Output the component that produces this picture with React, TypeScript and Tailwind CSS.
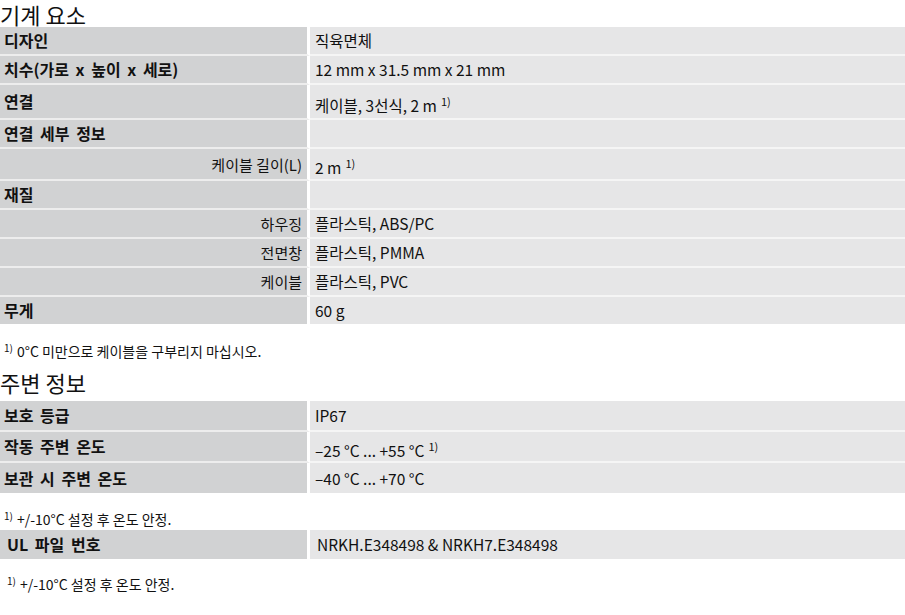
import React from 'react';

type Row = {
  label: string;
  value?: React.ReactNode;
  sub?: boolean;
  cell?: string;
};

const Sup = () => <sup className="text-[11px] ml-[4px] relative -top-[6px]">1)</sup>;

const mechanical: Row[] = [
  { label: '디자인', value: '직육면체' },
  { label: '치수(가로 x 높이 x 세로)', value: '12 mm x 31.5 mm x 21 mm' },
  { label: '연결', value: <>케이블, 3선식, 2 m<Sup /></>, cell: 'pt-[11px] pb-[3px]' },
  { label: '연결 세부 정보' },
  { label: '케이블 길이(L)', value: <>2 m<Sup /></>, sub: true, cell: 'pt-[9px] pb-[2px]' },
  { label: '재질' },
  { label: '하우징', value: '플라스틱, ABS/PC', sub: true },
  { label: '전면창', value: '플라스틱, PMMA', sub: true },
  { label: '케이블', value: '플라스틱, PVC', sub: true },
  { label: '무게', value: '60 g' },
];

const ambient: Row[] = [
  { label: '보호 등급', value: 'IP67', cell: 'py-[5px]' },
  { label: '작동 주변 온도', value: <>–25 °C ... +55 °C<Sup /></>, cell: 'pt-[9px] pb-[1px]' },
  { label: '보관 시 주변 온도', value: '–40 °C ... +70 °C', cell: 'pt-[6px] pb-[5px]' },
];

const font = { fontFamily: '"Noto Sans CJK KR", "Open Sans", sans-serif' };

const SpecTable: React.FC<{ rows: Row[]; wide?: boolean }> = ({ rows, wide }) => (
  <table className="w-full border-separate border-spacing-0 text-[#111]">
    <tbody>
      {rows.map((r, i) => {
        const sep = i < rows.length - 1 ? 'border-b-2 border-b-white/60' : '';
        const pad = r.cell ?? 'py-[4px]';
        return (
          <tr key={i}>
            <td
              className={`w-[310px] bg-[#d1d2d3] border-r-[3px] border-r-white ${sep} leading-[19px] ${
                r.sub
                  ? 'text-right pr-[5px] font-normal text-[15px]'
                  : `${wide ? 'pl-[7px]' : 'pl-[4px]'} font-bold text-[16px] [word-spacing:3px]`
              }`}
            >
              {r.label}
            </td>
            <td
              className={`bg-[#e6e6e7] ${sep} ${pad} leading-[19px] text-[15.5px] ${wide ? 'pl-[7px]' : 'pl-[5px]'}`}
            >
              {r.value ?? '\u00a0'}
            </td>
          </tr>
        );
      })}
    </tbody>
  </table>
);

const Footnote: React.FC<{ children: React.ReactNode; className?: string }> = ({ children, className = '' }) => (
  <p className={`text-[14px] leading-[18px] text-[#111] ${className}`}>
    <sup className="text-[10px] mr-[4px] relative -top-[5px]">1)</sup>
    {children}
  </p>
);

const App: React.FC = () => {
  return (
    <div className="w-[905px] bg-white" style={font}>
      <h2 className="text-[22px] leading-[26px] pt-[1px] font-normal text-[#111]">기계 요소</h2>
      <SpecTable rows={mechanical} />
      <Footnote className="pl-[4px] mt-[18px]">0°C 미만으로 케이블을 구부리지 마십시오.</Footnote>
      <h2 className="text-[22px] leading-[27px] font-normal text-[#111] mt-[9px] mb-[5px]">주변 정보</h2>
      <SpecTable rows={ambient} />
      <Footnote className="pl-[4px] mt-[17px]">+/-10°C 설정 후 온도 안정.</Footnote>
      <div className="mt-[2px]">
        <SpecTable rows={[{ label: 'UL 파일 번호', value: 'NRKH.E348498 & NRKH7.E348498', cell: 'py-[5px]' }]} wide />
      </div>
      <Footnote className="pl-[7px] mt-[16px]">+/-10°C 설정 후 온도 안정.</Footnote>
    </div>
  );
};

export default App;
